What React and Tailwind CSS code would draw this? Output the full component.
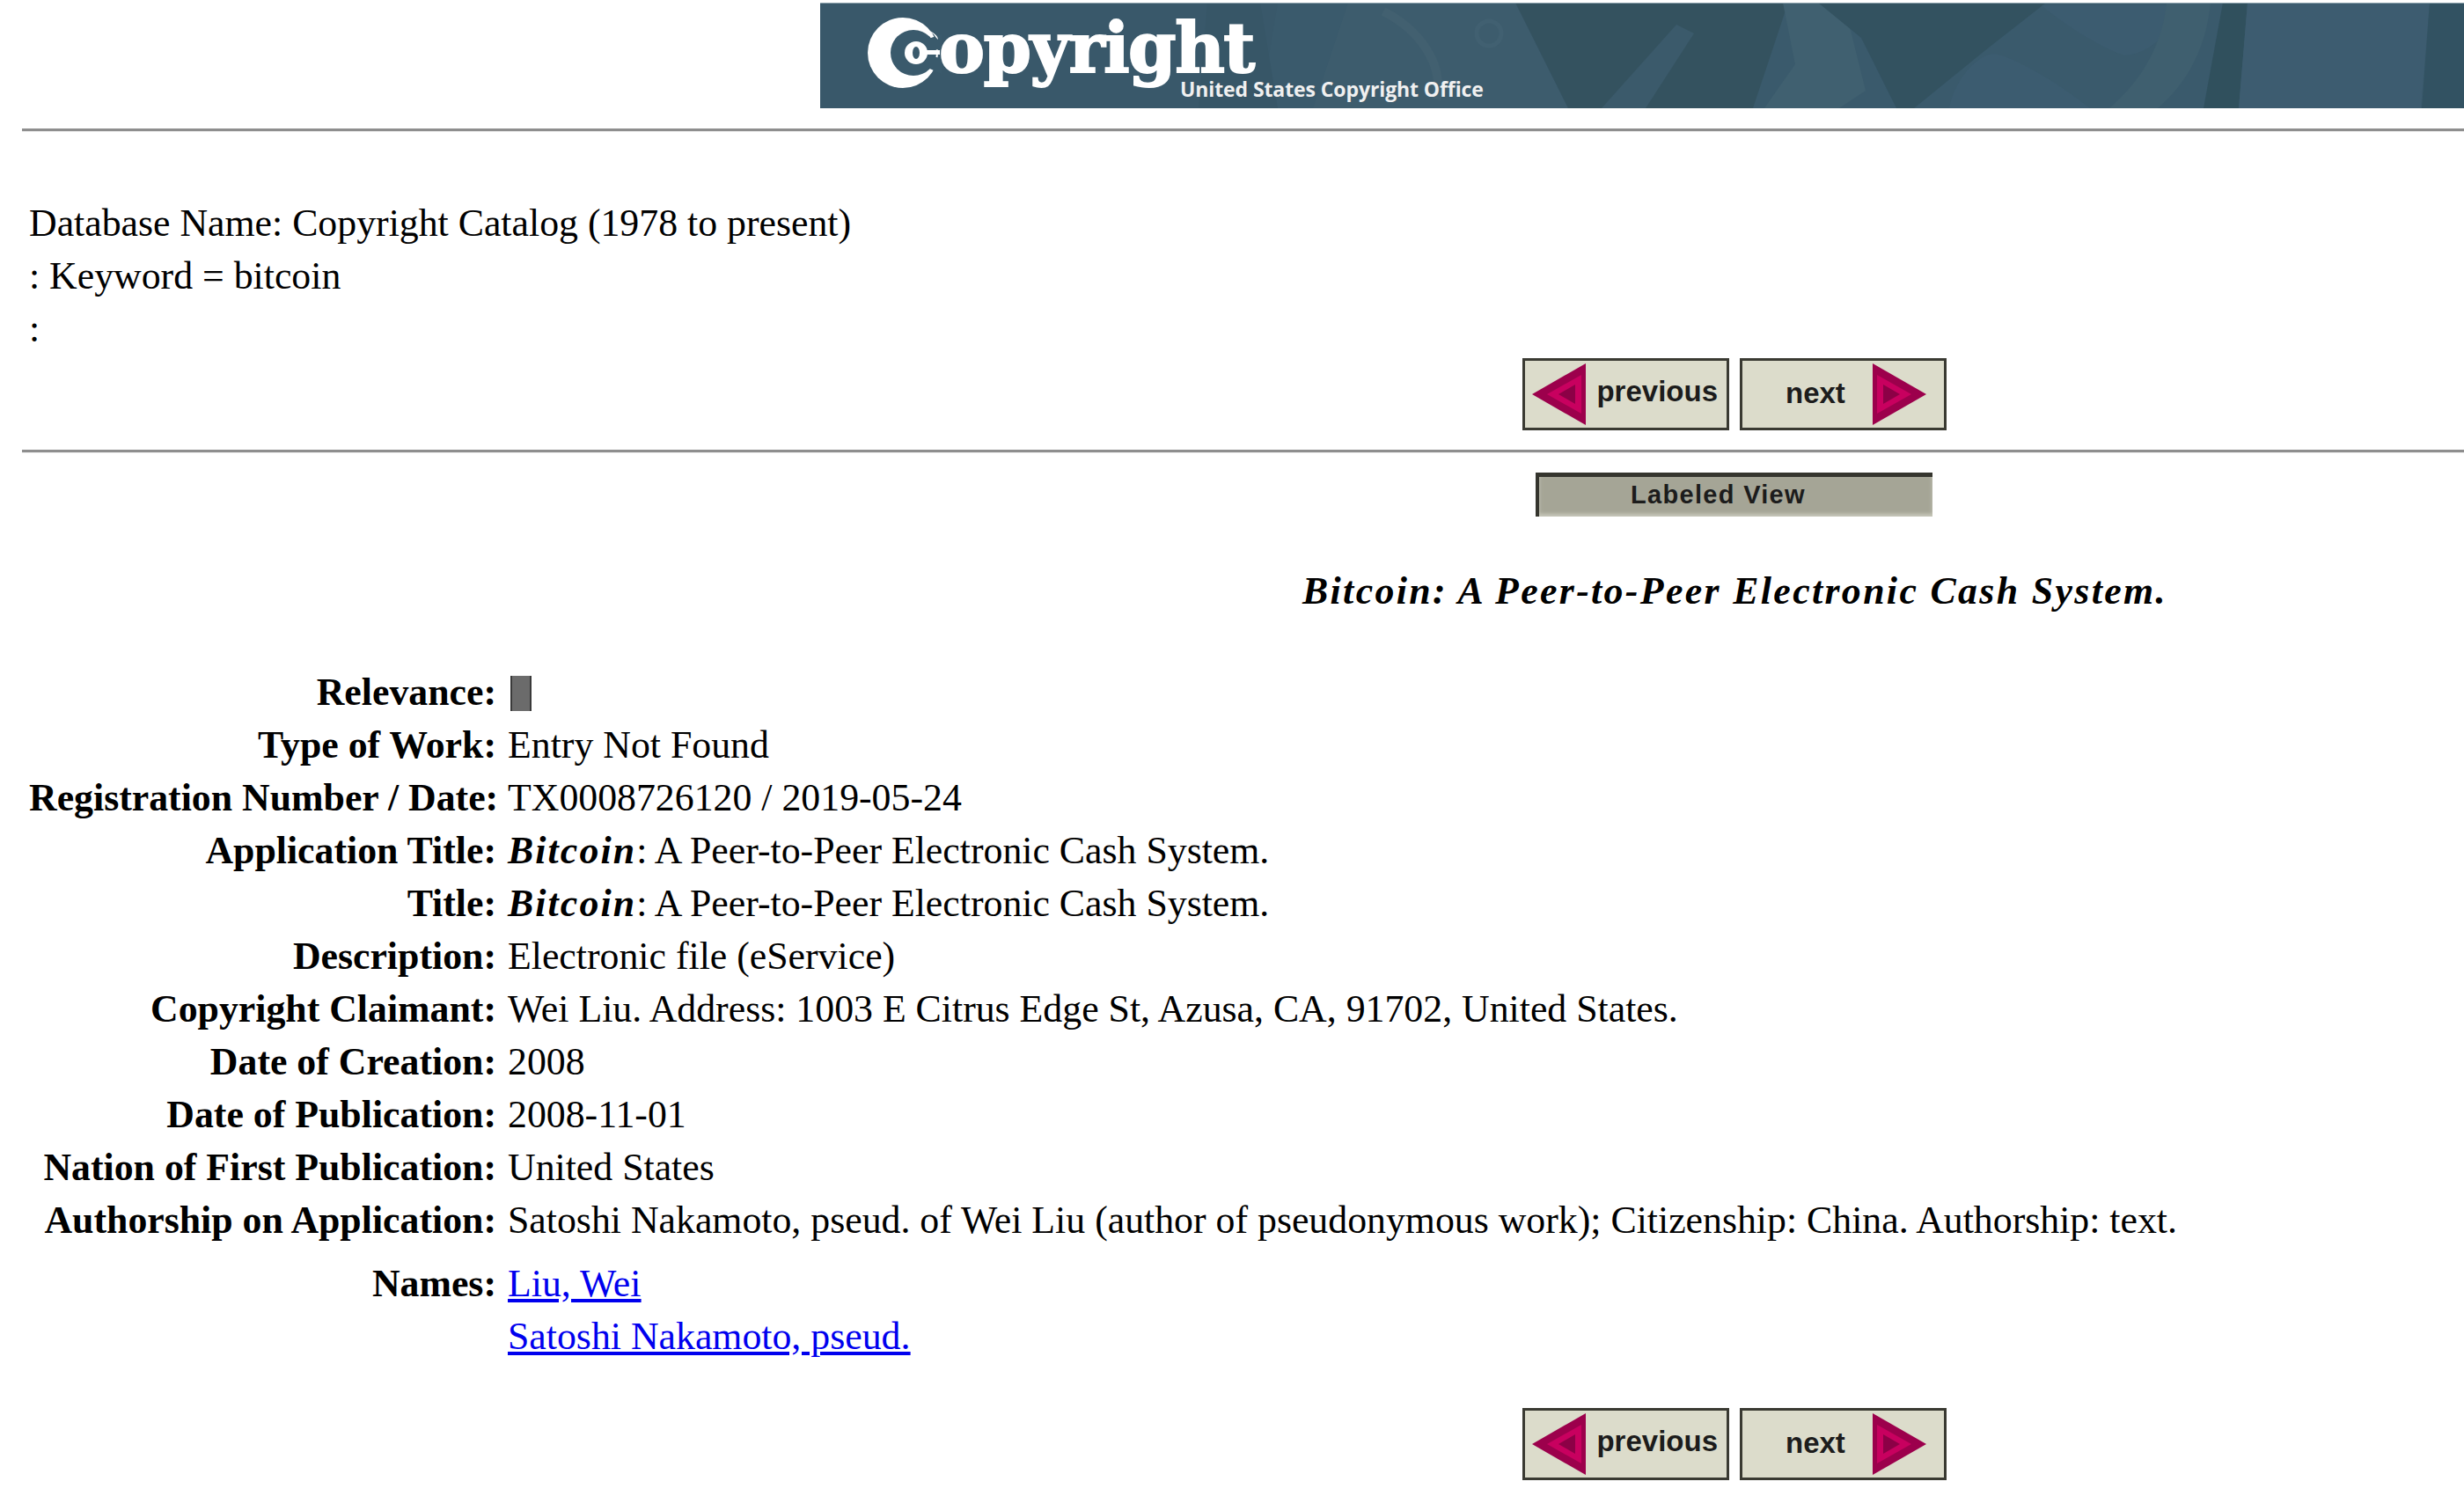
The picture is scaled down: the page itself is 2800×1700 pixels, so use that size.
const Rule = ({ className = "" }) => (
  <div className={`ml-[25px] h-[4px] border-t-[3px] border-[#8e8e8e] bg-[#ececec] ${className}`} />
);

const NavButton = ({ dir, label }) => {
  const prev = dir === "prev";
  return (
    <div className={`flex h-[82px] w-[235px] items-center justify-between border-[3px] border-[#3a3a32] bg-[#dcdccb] font-['Liberation_Sans',Arial,sans-serif] text-[33px] font-bold text-[#1c1c1c] ${prev ? "pl-[8px] pr-[10px]" : "pl-[49px] pr-[20px]"}`}>
      {!prev && <span className="-mt-[2px]">{label}</span>}
      <svg width="62" height="70" viewBox="0 0 62 70" className="shrink-0">
        <g transform={prev ? "" : "translate(62,0) scale(-1,1)"}>
          <polygon points="0,35 61,0 61,70" fill="#9c004c" />
          <polygon points="17,35 56,13 56,57" fill="#c8005f" />
          <polygon points="30,35 49,24 49,46" fill="#8c0046" />
        </g>
      </svg>
      {prev && <span className="-mt-[6px]">{label}</span>}
    </div>
  );
};

const NavRow = ({ className = "" }) => (
  <div className={`ml-[1730px] flex gap-[12px] ${className}`}>
    <NavButton dir="prev" label="previous" />
    <NavButton dir="next" label="next" />
  </div>
);

const B = () => <b className="italic tracking-[2.1px]">Bitcoin</b>;

const rows = [
  ["Relevance:", <div className="mt-[12px] ml-[3px] h-[40px] w-[24px] border-x-2 border-[#3a3a3a] bg-[#6b6b6b]" />],
  ["Type of Work:", "Entry Not Found"],
  ["Registration Number / Date:", "TX0008726120 / 2019-05-24"],
  ["Application Title:", <><B />: A Peer-to-Peer Electronic Cash System.</>],
  ["Title:", <><B />: A Peer-to-Peer Electronic Cash System.</>],
  ["Description:", "Electronic file (eService)"],
  ["Copyright Claimant:", "Wei Liu. Address: 1003 E Citrus Edge St, Azusa, CA, 91702, United States."],
  ["Date of Creation:", "2008"],
  ["Date of Publication:", "2008-11-01"],
  ["Nation of First Publication:", "United States"],
  ["Authorship on Application:", "Satoshi Nakamoto, pseud. of Wei Liu (author of pseudonymous work); Citizenship: China. Authorship: text."],
];

export default function App() {
  return (
    <div className="h-[1700px] w-[2800px] overflow-hidden bg-white font-['Liberation_Serif','Times_New_Roman',serif] text-[43.8px] leading-[60px] text-black">
      <div className="relative mt-[3px] ml-[932px] h-[120px] overflow-hidden bg-[#3a5a6c]">
        <svg className="absolute inset-0" width="1868" height="120" viewBox="0 0 1868 120" fill="none">
          <path d="M0 0h520l-20 120H0z" fill="#39586a" />
          <path d="M440 0h60l20 120h-90z" fill="#375667" />
          <path d="M600 0h190l60 120H560z" fill="#3d5c6d" />
          <path d="M640 10c40 20 70 60 60 100" stroke="#426070" strokeWidth="10" />
          <circle cx="760" cy="35" r="14" stroke="#416071" strokeWidth="5" />
          <path d="M790 0h310l-40 120H850z" fill="#34525f" />
          <path d="M973 25l20 10-55 85h-50z" fill="#3b5a6b" />
          <path d="M1094 0h69l25 100-30 20h-85l35-50z" fill="#406070" />
          <path d="M1134 0h259l-70 55-80 65h-20l-40-80z" fill="#335260" />
          <path d="M1283 120c5-30 30-60 50-62 20 2 70 30 110 62z" fill="#3c5c70" />
          <path d="M1388 3h154c-5 30-30 55-60 57-30-10-75-40-94-57z" fill="#3c5c70" />
          <path d="M1530 0h50c-5 50-25 90-60 120h-55c35-30 60-70 65-120z" fill="#3f5f6f" />
          <path d="M1594 0h28l-10 120h-40z" fill="#30505d" />
          <path d="M1622 0h207l-10 120h-207z" fill="#3d5c70" />
          <path d="M1829 0h39v120h-48z" fill="#325262" />
          <path d="M0 0h1868" stroke="#8fa5b0" strokeWidth="2" />
        </svg>
        <svg className="absolute left-[54px] top-[16px]" width="84" height="82" viewBox="0 0 84 82" fill="none">
          <ellipse cx="40" cy="41" rx="40" ry="40" fill="#fff" />
          <circle cx="52" cy="41" r="26" fill="#3a5a6c" />
          <path d="M66 26l18-6v16l-12 3v6l12 2v18l-18-8z" fill="#3a5a6c" />
          <path d="M78 24a26 26 0 0 0-8-8c5 2 10 6 10 10z" fill="#fff" />
          <ellipse cx="55" cy="41" rx="13" ry="13" fill="#fff" />
          <ellipse cx="55" cy="41" rx="4" ry="7" fill="#3a5a6c" />
          <path d="M60 38h22v5H60z" fill="#fff" />
        </svg>
        <span className="absolute left-[135px] top-[21px] font-['DejaVu_Serif',serif] text-[78px] font-bold leading-[62px] tracking-[-1.5px] text-white [-webkit-text-stroke:2px_white]">opyright</span>
        <span className="absolute left-[409px] top-[84px] font-['Open_Sans',sans-serif] text-[23px] font-bold leading-[28px] tracking-[-0.1px] text-[#f0f0f0]">United States Copyright Office</span>
      </div>
      <Rule className="mt-[23px]" />
      <div className="mt-[73px] pl-[33px]">
        <div>Database Name: Copyright Catalog (1978 to present)</div>
        <div>: Keyword = bitcoin</div>
        <div>:</div>
      </div>
      <NavRow className="mt-[4px]" />
      <Rule className="mt-[22px]" />
      <div className="mt-[22px] ml-[1745px] flex h-[50px] w-[451px] items-center justify-center border-t-[5px] border-l-[4px] border-[#35352e] bg-[#a5a596] pr-[40px] pb-[6px] font-['Liberation_Sans',Arial,sans-serif] text-[29px] font-bold tracking-[1.3px] text-[#1c1c1c] shadow-[inset_0_-3px_4px_#c9c9bc]">
        Labeled View
      </div>
      <div className="mt-[54px] ml-[1480px] whitespace-nowrap font-bold italic tracking-[2.36px]">
        Bitcoin: A Peer-to-Peer Electronic Cash System.
      </div>
      <div className="mt-[55px] grid grid-cols-[531px_1fr] gap-x-[13px] pl-[33px]">
        {rows.map(([k, v]) => (
          <div key={k} className="contents">
            <div className="whitespace-nowrap text-right font-bold">{k}</div>
            <div className="whitespace-nowrap">{v}</div>
          </div>
        ))}
        <div className="mt-[12px] text-right font-bold">Names:</div>
        <div className="mt-[12px] flex flex-col text-[#0000ee] underline">
          <a href="#n1">Liu, Wei</a>
          <a href="#n2">Satoshi Nakamoto, pseud.</a>
        </div>
      </div>
      <NavRow className="mt-[52px]" />
    </div>
  );
}
